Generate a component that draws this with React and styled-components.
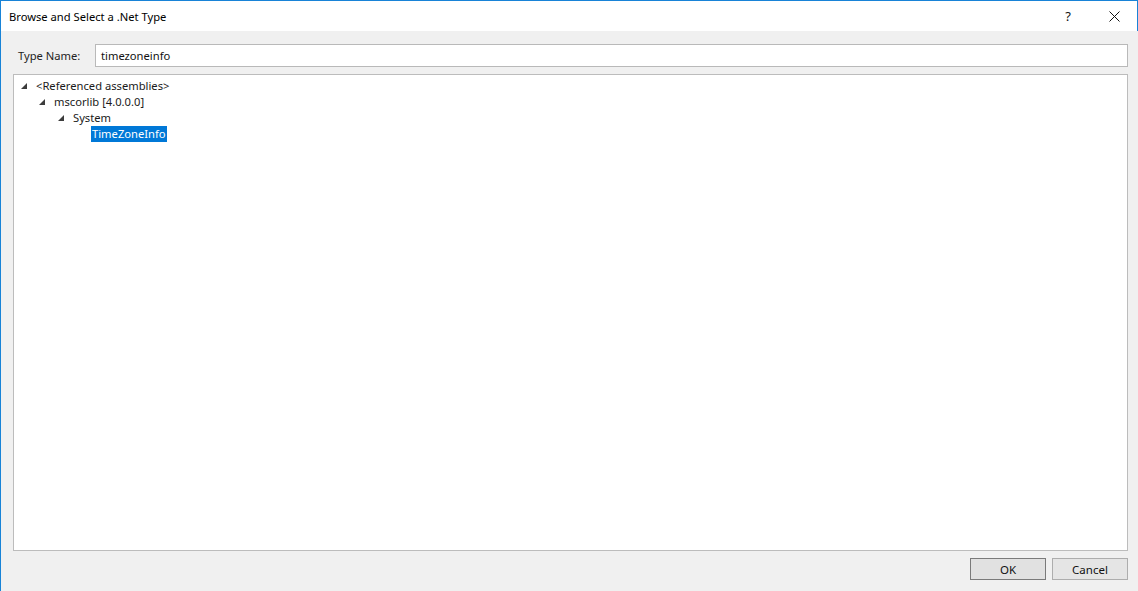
import styled, { createGlobalStyle } from 'styled-components';

const GlobalStyle = createGlobalStyle`
  html, body { margin: 0; padding: 0; }
  body {
    width: 1138px;
    height: 591px;
    overflow: hidden;
    font-family: "Segoe UI", "Noto Sans", "Open Sans", sans-serif;
    font-size: 11.2px;
    color: #000;
  }
`;

const Window = styled.div`
  width: 1138px;
  height: 591px;
  box-sizing: border-box;
  display: flex;
  flex-direction: column;
  background: #f0f0f0;
  border-left: 1px solid #1883d7;
`;

const TitleBar = styled.div`
  height: 31px;
  box-sizing: border-box;
  display: flex;
  align-items: center;
  background: #fff;
  border-top: 1px solid #1883d7;
  border-right: 1px solid #1883d7;
  padding-left: 8px;
`;

const Title = styled.div`
  flex: 1;
  padding-top: 1px;
`;

const TitleButton = styled.div`
  width: 46px;
  height: 30px;
  display: flex;
  align-items: center;
  justify-content: center;
  font-size: 13px;
  color: #111;
`;

const Body = styled.div`
  flex: 1;
  display: flex;
  flex-direction: column;
  padding: 13px 10px 11px 12px;
`;

const NameRow = styled.div`
  display: flex;
  align-items: center;
  height: 23px;
  padding-left: 5px;
`;

const Label = styled.div`
  width: 77px;
  color: #222;
`;

const TextBox = styled.div`
  flex: 1;
  height: 23px;
  box-sizing: border-box;
  border: 1px solid #b9b9b9;
  background: #fff;
  padding: 3px 5px;
  color: #111;
`;

const Tree = styled.div`
  margin-top: 7px;
  height: 477px;
  box-sizing: border-box;
  border: 1px solid #bcbcbc;
  background: #fff;
  padding: 3px 0 0 0;
`;

const Node = styled.div`
  display: flex;
  align-items: center;
  height: 16px;
  padding-left: ${p => p.$indent}px;
`;

const Expander = styled.span`
  width: 18px;
  display: flex;
  align-items: center;
  padding-left: 4px;
  box-sizing: border-box;
`;

const NodeText = styled.span`
  padding: 0 1px;
  line-height: 16px;
  background: ${p => (p.$selected ? '#0078d7' : 'transparent')};
  color: ${p => (p.$selected ? '#fff' : '#1a1a1a')};
`;

const Footer = styled.div`
  display: flex;
  justify-content: flex-end;
  gap: 6px;
  margin-top: 7px;
`;

const Button = styled.button`
  width: 76px;
  height: 22px;
  box-sizing: border-box;
  font-family: inherit;
  font-size: 11.5px;
  color: #111;
  padding: 0;
  background: ${p => (p.$default ? '#e1e1e1' : '#e5e5e5')};
  border: 1px solid ${p => (p.$default ? '#7a7a7a' : '#adadad')};
`;

const Arrow = () => (
  <svg width="6" height="6" viewBox="0 0 6 6">
    <polygon points="6,0 6,6 0,6" fill="#3c3c3c" />
  </svg>
);

const nodes = [
  { text: '<Referenced assemblies>', indent: 3, expanded: true },
  { text: 'mscorlib [4.0.0.0]', indent: 21, expanded: true },
  { text: 'System', indent: 40, expanded: true },
  { text: 'TimeZoneInfo', indent: 59, selected: true },
];

export default function App() {
  return (
    <>
      <GlobalStyle />
      <Window>
        <TitleBar>
          <Title>Browse and Select a .Net Type</Title>
          <TitleButton>?</TitleButton>
          <TitleButton>
            <svg width="11" height="11" viewBox="0 0 11 11">
              <path d="M0.5 0.5L10.5 10.5M10.5 0.5L0.5 10.5" stroke="#111" strokeWidth="1" />
            </svg>
          </TitleButton>
        </TitleBar>
        <Body>
          <NameRow>
            <Label>Type Name:</Label>
            <TextBox>timezoneinfo</TextBox>
          </NameRow>
          <Tree>
            {nodes.map(n => (
              <Node key={n.text} $indent={n.indent}>
                <Expander>{n.expanded && <Arrow />}</Expander>
                <NodeText $selected={n.selected}>{n.text}</NodeText>
              </Node>
            ))}
          </Tree>
          <Footer>
            <Button $default>OK</Button>
            <Button>Cancel</Button>
          </Footer>
        </Body>
      </Window>
    </>
  );
}
